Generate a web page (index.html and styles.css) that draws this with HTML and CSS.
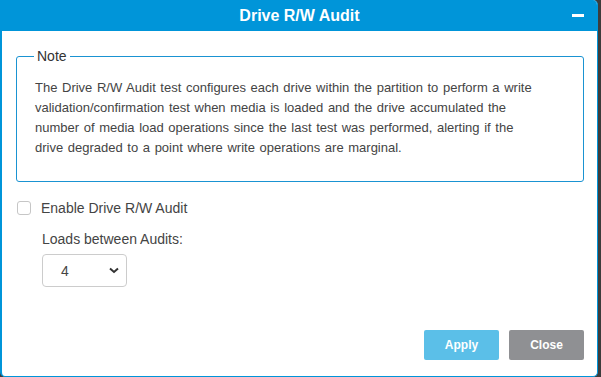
FILE: index.html
```html
<!DOCTYPE html>
<html lang="en">
<head>
	<meta charset="UTF-8">
	<meta name="viewport" content="width=device-width, initial-scale=1.0">
	<title>Drive R/W Audit</title>
	<link rel="stylesheet" href="styles.css">
</head>
<body>

	<div class="dialog">
		<div class="dialog__header">
			<span class="dialog__title">Drive R/W Audit</span>
			<span class="dialog__minimize"></span>
		</div>

		<div class="dialog__body">
			<fieldset class="note">
				<legend class="note__legend">Note</legend>
				<p class="note__text">The Drive R/W Audit test configures each drive within the partition to perform a write validation/confirmation test when media is loaded and the drive accumulated the number of media load operations since the last test was performed, alerting if the drive degraded to a point where write operations are marginal.</p>
			</fieldset>

			<label class="check">
				<span class="check__box"></span>
				<span class="check__label">Enable Drive R/W Audit</span>
			</label>

			<div class="loads">
				<div class="loads__label">Loads between Audits:</div>
				<div class="select">
					<span class="select__value">4</span>
					<svg class="select__arrow" width="10" height="7" viewBox="0 0 10 7">
						<path d="M1 1.5 L5 5 L9 1.5" fill="none" stroke="#333" stroke-width="2"/>
					</svg>
				</div>
			</div>
		</div>

		<div class="dialog__footer">
			<button class="btn btn--apply">Apply</button>
			<button class="btn btn--close">Close</button>
		</div>
	</div>

</body>
</html>
```

FILE: styles.css
```css
*, *::after, *::before {
	box-sizing: border-box;
}

body {
	margin: 0;
	background-color: #3c3c3c;
	font-family: "Liberation Sans", Arial, sans-serif;
	color: #444;
}

.dialog {
	display: flex;
	flex-direction: column;
	width: 598px;
	height: 377px;
	border: 1px solid #0095d9;
	border-left-width: 2px;
	border-top: none;
	border-radius: 0 5px 5px 5px;
	background-color: #fff;
	overflow: hidden;
}

.dialog__header {
	position: relative;
	display: flex;
	justify-content: center;
	align-items: center;
	height: 31px;
	background-color: #0095d9;
}

.dialog__title {
	font-size: 16px;
	font-weight: bold;
	color: #fff;
}

.dialog__minimize {
	position: absolute;
	right: 13px;
	top: 14px;
	width: 12px;
	height: 3px;
	background-color: #fff;
}

.dialog__body {
	flex: 1;
	padding: 17px 13px 0 14px;
}

.note {
	margin: 0;
	padding: 14px 40px 23px 18px;
	border: 1px solid #1a93d2;
	border-radius: 3px;
}

.note__legend {
	padding: 0 3px;
	margin-left: -1px;
	font-size: 14px;
	color: #333;
}

.note__text {
	margin: 0;
	font-size: 13px;
	word-spacing: 1px;
	line-height: 20px;
	color: #444;
}

.check {
	display: flex;
	align-items: center;
	margin-top: 18px;
	margin-left: 1px;
}

.check__box {
	width: 14px;
	height: 14px;
	border: 1px solid #c6c6c6;
	border-radius: 3px;
	background: #fff;
}

.check__label {
	margin-left: 10px;
	font-size: 14px;
	color: #444;
}

.loads {
	padding-left: 26px;
	margin-top: 15px;
}

.loads__label {
	font-size: 14px;
	color: #444;
}

.select {
	display: flex;
	align-items: center;
	justify-content: space-between;
	width: 85px;
	height: 33px;
	margin-top: 7px;
	padding: 0 7px 0 18px;
	border: 1px solid #ccc;
	border-radius: 4px;
}

.select__value {
	font-size: 14px;
	color: #444;
}

.dialog__footer {
	display: flex;
	justify-content: flex-end;
	gap: 10px;
	padding: 0 13px 16px 0;
}

.btn {
	width: 75px;
	height: 30px;
	border: none;
	border-radius: 2px;
	font-family: inherit;
	font-size: 12px;
	font-weight: bold;
	color: #fff;
}

.btn--apply {
	background-color: #5bbfe8;
}

.btn--close {
	background-color: #8f9093;
}
```
